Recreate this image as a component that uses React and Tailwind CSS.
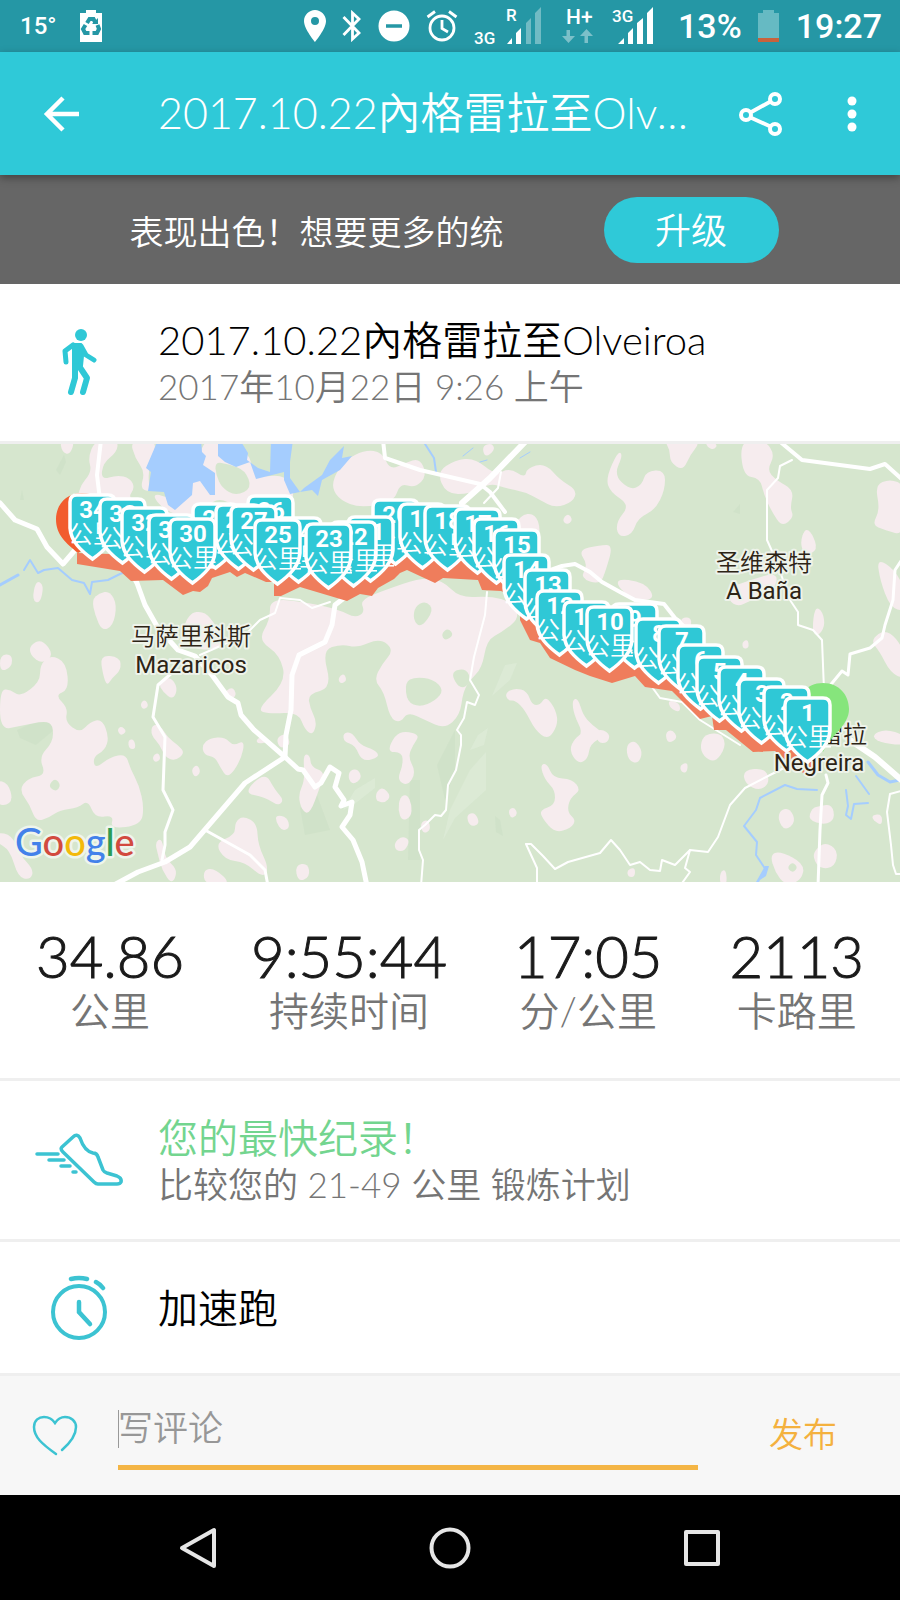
import React from "react";

const PINK = [
  [[60,440],[75,440],[70,455],[62,452]],
  [[88,458],[95,440],[118,440],[117,452],[103,463],[101,480],[117,475],[130,478],[135,488],[127,499],[155,510],[210,520],[75,525],[78,488],[92,472]],
  [[130,440],[158,440],[150,462],[148,482],[152,492],[140,489],[145,472],[135,458]],
  [[150,492],[175,500],[197,470],[203,440],[222,440],[248,450],[255,478],[285,474],[296,494],[285,508],[240,508],[215,496],[200,520],[165,512]],
  [[36,580],[44,585],[40,604],[32,600]],
  [[99,593],[110,591],[117,605],[113,626],[102,631],[95,615],[92,600]],
  [[0,655],[12,654],[12,667],[0,672]],
  [[188,613],[205,611],[215,625],[230,642],[205,652],[180,642]],
  [[270,598],[310,603],[340,610],[355,618],[365,612],[360,600],[385,590],[420,578],[442,580],[460,598],[490,596],[512,602],[520,618],[502,632],[487,640],[482,668],[470,680],[463,692],[460,715],[445,729],[425,720],[408,712],[400,723],[390,718],[384,692],[374,680],[382,664],[394,650],[380,638],[357,648],[342,644],[322,650],[332,688],[308,694],[310,708],[317,722],[313,735],[305,730],[298,712],[270,714],[256,710],[286,682],[280,655],[258,640],[270,620]],
  [[335,475],[345,460],[365,450],[382,452],[390,470],[405,463],[420,458],[427,476],[415,488],[400,483],[394,502],[360,508],[340,500],[332,488]],
  [[437,472],[455,460],[475,458],[495,475],[510,468],[525,478],[527,468],[545,463],[560,480],[577,490],[573,502],[555,508],[540,500],[525,492],[505,488],[490,483],[470,494],[446,494]],
  [[482,446],[492,443],[495,450],[485,458]],
  [[520,515],[535,513],[541,530],[535,555],[515,555],[510,535]],
  [[562,520],[568,513],[573,520],[567,525]],
  [[578,550],[600,545],[613,545],[606,570],[600,585],[580,578],[588,565]],
  [[618,451],[623,455],[614,475],[630,490],[642,485],[646,471],[665,470],[665,490],[655,510],[638,518],[632,535],[618,537],[616,522],[630,505],[610,492],[606,478]],
  [[664,440],[702,440],[690,455],[683,471],[670,462],[670,450]],
  [[705,440],[718,444],[714,450],[707,447]],
  [[740,440],[765,440],[775,455],[767,470],[776,480],[794,490],[790,508],[794,517],[782,527],[772,512],[764,495],[760,478],[743,476]],
  [[805,528],[812,533],[818,550],[805,556],[800,543]],
  [[723,590],[750,580],[778,572],[775,590],[752,600],[735,608]],
  [[875,485],[890,479],[905,485],[905,536],[885,530],[872,525],[880,510]],
  [[877,558],[895,570],[905,590],[905,612],[890,607],[880,580]],
  [[815,606],[823,612],[825,627],[817,637],[812,630]],
  [[742,642],[748,639],[749,648],[743,649]],
  [[870,640],[887,628],[905,650],[905,680],[890,672],[880,652]],
  [[682,617],[692,618],[690,630],[680,625]],
  [[612,578],[645,582],[656,600],[630,600]],
  [[668,700],[680,703],[680,713],[670,708]],
  [[700,745],[705,734],[722,733],[726,747],[715,763],[703,756]],
  [[665,733],[672,729],[678,738],[668,744]],
  [[626,745],[635,740],[643,752],[638,764],[628,760]],
  [[597,728],[610,733],[608,743],[597,743]],
  [[680,765],[688,762],[687,773],[681,772]],
  [[743,770],[765,768],[770,782],[760,791],[745,784]],
  [[780,810],[790,808],[796,822],[785,831],[778,820]],
  [[812,808],[820,806],[832,804],[835,819],[825,825],[808,820]],
  [[815,850],[825,842],[838,850],[835,867],[820,869],[813,858]],
  [[770,855],[780,851],[805,864],[801,881],[785,885],[775,872]],
  [[872,735],[885,729],[905,735],[905,746],[878,742]],
  [[872,815],[882,814],[882,826],[873,820]],
  [[720,872],[726,869],[727,885],[720,885]],
  [[627,870],[635,867],[635,877],[628,877]],
  [[505,693],[515,688],[527,691],[532,705],[540,705],[546,696],[556,710],[558,725],[548,740],[535,730],[525,710],[515,700],[508,701]],
  [[572,700],[578,698],[583,715],[592,725],[606,735],[590,744],[588,759],[578,764],[569,750],[575,738],[583,733],[574,715]],
  [[540,765],[547,763],[553,778],[572,779],[581,790],[570,798],[567,812],[576,820],[571,828],[555,833],[542,818],[540,810],[555,805],[555,790],[545,780]],
  [[466,815],[475,812],[480,824],[470,827]],
  [[508,810],[514,807],[518,814],[511,819]],
  [[395,735],[405,731],[420,735],[413,745],[408,757],[416,772],[408,786],[397,780],[403,765],[402,752],[387,752]],
  [[400,797],[407,794],[412,805],[411,817],[402,821],[398,810]],
  [[350,770],[358,769],[362,778],[353,785],[348,778]],
  [[376,792],[383,787],[391,796],[385,803],[376,801]],
  [[394,843],[402,836],[410,840],[405,851],[396,851]],
  [[343,733],[352,732],[360,745],[375,750],[380,757],[362,762],[355,745],[344,742]],
  [[338,678],[344,673],[347,681],[340,684]],
  [[303,754],[310,755],[311,767],[325,772],[320,787],[310,814],[302,811],[298,795],[305,780]],
  [[420,823],[428,819],[431,830],[423,834]],
  [[295,865],[308,863],[310,877],[298,882]],
  [[0,690],[10,689],[20,697],[40,682],[40,665],[50,655],[66,662],[69,690],[55,695],[68,708],[65,722],[80,733],[90,722],[102,719],[109,737],[105,750],[93,757],[95,769],[110,757],[126,754],[130,768],[139,785],[144,807],[141,825],[110,829],[114,815],[95,818],[88,800],[78,808],[60,810],[50,817],[36,822],[30,805],[19,790],[28,778],[46,775],[39,757],[53,742],[53,725],[45,721],[20,726],[0,730]],
  [[30,645],[42,639],[54,655],[42,664],[30,655]],
  [[-4,780],[8,783],[13,800],[5,806],[-4,803]],
  [[100,655],[120,657],[121,670],[112,678],[107,686],[103,675]],
  [[158,683],[170,676],[178,688],[173,700],[163,692]],
  [[140,704],[145,699],[149,706],[143,710]],
  [[117,730],[121,726],[127,731],[121,736]],
  [[128,740],[134,739],[136,749],[129,749]],
  [[152,725],[160,725],[168,738],[178,745],[185,753],[175,761],[165,757],[160,745],[151,735]],
  [[152,757],[158,752],[161,759],[155,763]],
  [[191,770],[197,764],[201,772],[195,778]],
  [[202,745],[210,738],[225,737],[233,746],[245,740],[241,760],[228,779],[220,767],[215,757],[204,755]],
  [[222,695],[232,686],[237,695],[230,700]],
  [[256,740],[262,736],[268,742],[258,744]],
  [[276,738],[286,733],[291,745],[280,749]],
  [[243,793],[265,772],[275,790],[284,800],[278,806],[265,797]],
  [[215,843],[235,835],[235,822],[243,816],[257,823],[258,845],[269,868],[263,878],[245,862],[225,860]],
  [[276,815],[287,817],[290,828],[282,831],[276,822]],
  [[203,870],[215,868],[232,885],[205,885]],
  [[155,842],[162,838],[165,858],[178,870],[172,885],[162,870],[158,855]],
  [[-4,832],[12,835],[20,855],[34,870],[30,880],[18,877],[10,850],[-4,842]],
];

const HOLES = [
  [[415,606],[426,601],[434,610],[421,628],[413,620]],
  [[441,634],[448,628],[454,635],[445,641]],
  [[405,682],[415,677],[433,679],[444,690],[435,701],[420,707],[407,702]],
  [[48,786],[55,778],[61,785],[56,792]],
  [[787,868],[792,862],[798,867],[793,873]],
  [[450,672],[466,668],[472,682],[460,690]],
  [[252,450],[268,440],[270,462],[264,464]],
  [[215,462],[228,464],[245,470],[252,488],[236,496],[222,488],[216,475]],
];

const LAKES = [
  [[158,440],[201,440],[202,452],[206,456],[203,465],[215,473],[215,495],[210,495],[200,481],[193,483],[192,495],[175,510],[168,505],[164,492],[148,491],[151,472],[146,468]],
  [[218,440],[240,440],[248,453],[247,460],[258,468],[270,472],[271,440],[293,440],[290,462],[290,478],[300,492],[290,494],[284,480],[284,472],[256,479],[250,462],[236,467],[225,462],[218,456]],
  [[344,446],[330,460],[322,475],[304,488],[300,492],[312,490],[318,496],[322,480],[340,470],[352,456],[342,458]],
  [[765,866],[769,866],[766,876],[760,880],[758,884],[756,882]],
];

const SHADES = [
  [[17,730],[50,715],[54,730],[36,745],[20,738]],
  [[437,765],[455,730],[455,770],[445,800]],
  [[410,780],[420,780],[420,860],[408,860]],
  [[495,816],[500,820],[503,836],[496,832]],
  [[300,808],[315,790],[330,830],[305,835]],
  [[56,470],[64,455],[66,462],[60,475]],
  [[733,512],[740,504],[740,514]],
  [[20,500],[22,490],[24,500]],
];

const LIGHTS = [
  [[450,810],[470,770],[486,752],[486,790],[455,818],[443,840]],
  [[492,696],[505,665],[517,663],[510,680]],
  [[470,750],[478,735],[488,728],[484,745]],
  [[343,810],[355,790],[375,778],[375,788],[352,806]],
];

const ROADS = [
  [5, "0,503 15,520 37,529 47,547 63,564 75,550 85,530"],
  [4, "101,440 97,475 100,500"],
  [5, "130,570 137,583 145,605 158,628 178,650 195,656 212,675 228,697 238,703 241,715 254,730 285,757 298,769 303,770 315,787 321,783 330,767 339,773 335,787 344,800 341,806 352,802 350,815 342,827 353,840 362,862 367,886"],
  [5, "285,757 245,783 190,847 165,862 138,872 112,886"],
  [5, "285,757 286,735 291,710 292,675 299,655 325,642 332,625 335,605 344,598"],
  [3, "173,672 158,685 153,717 165,737 163,790 173,810 165,832 165,845 162,860"],
  [3, "205,830 250,855 265,870 268,886"],
  [2, "200,655 245,635 260,620 275,613 280,598 300,600 312,608 330,602"],
  [4, "383,440 385,458 420,470 480,484 490,492 505,512"],
  [6, "525,442 490,478 462,503"],
  [2, "501,472 498,488 484,503"],
  [4, "545,572 562,566 575,564 590,572 602,582 620,592 635,600 664,604 675,618 690,632"],
  [2, "487,592 485,615 474,657 470,680 479,695 475,705 467,702 464,718 457,730 461,735 461,745 456,770 448,785 446,810 441,816 435,815 425,825 419,830 419,850 423,860 421,886"],
  [2, "537,886 537,868 526,844 531,844 543,856 555,869 568,862 600,853 611,840 620,850 630,865 640,862 650,870 660,871 662,860 675,865 690,850 708,852 718,837 730,805 745,788 770,775 790,765"],
  [2, "690,850 685,868 690,872 680,886"],
  [4, "778,440 802,460 870,469 885,464 905,482"],
  [2, "792,460 780,466 778,478 767,490 767,540 776,560 790,600 798,612 798,625 813,630 822,640 824,690"],
  [3, "905,555 895,570 893,600 885,625 882,638 870,648 850,654 848,675 842,671 828,688"],
  [6, "850,740 875,757 905,783"],
  [3, "826,775 828,783 822,795 820,830 818,886"],
  [2, "905,790 890,794 887,812 891,845 893,865 896,874 905,874"],
  [2, "652,687 660,698 682,702 700,720 740,745"],
];

const RIVERS = [
  [3, "0,585 18,575"],
  [2, "24,570 30,560 38,573 44,570 58,568 72,580 84,583 90,594 92,582 108,580 120,574 140,566"],
  [2, "425,444 434,458 436,472"],
  [1, "463,456 473,448 M480,462 487,460 M520,458 530,452"],
  [2, "817,790 797,789 785,785 760,798 756,810 744,826 757,842 756,855 766,870"],
  [2, "846,790 848,806 846,815 851,819 854,804 868,803"],
  [2, "856,776 869,794"],
  [3, "868,762 878,775 890,782 905,779"],
];

const PINS = [
  [34,68,493],[33,98,497],[32,120,506],[31,147,513],[30,168,517],[29,191,502],
  [28,214,503],[27,229,504],[26,246,494],[25,253,518],[24,274,516],[23,304,522],
  [22,329,520],[21,346,515],[20,371,498],[19,398,502],[18,423,504],[17,453,507],
  [16,472,517],[15,492,528],[14,502,553],[13,523,568],[12,535,589],[11,562,600],
  [10,585,605],[9,610,602],[8,634,617],[7,657,624],[6,676,643],[5,695,655],
  [4,717,665],[3,737,677],[2,762,685],[1,783,696],
].sort((a, b) => a[2] - b[2]);

function smooth(points) {
  const n = points.length;
  const mid = (a, b) => [(a[0] + b[0]) / 2, (a[1] + b[1]) / 2];
  const start = mid(points[n - 1], points[0]);
  let d = `M${start[0]} ${start[1]}`;
  points.forEach((p, i) => {
    const m = mid(p, points[(i + 1) % n]);
    d += `Q${p[0]} ${p[1]} ${m[0]} ${m[1]}`;
  });
  return d + "Z";
}

const straight = (points) => "M" + points.map((p) => p.join(" ")).join("L") + "Z";

function Pin({ km, x, y }) {
  return (
    <g transform={`translate(${x} ${y})`}>
      <path
        d="M9 2H40Q47 2 47 9V35C46 48 37 57 24.500 66C12 57 3 48 2 35V9Q2 2 9 2Z"
        fill="#2fc8d6"
        stroke="#fff"
        strokeWidth="3.500"
      />
      <g clipPath="url(#pin)" fill="#fff" textAnchor="middle">
        <text x="25" y="25" className="font-['Roboto'] text-[24px] font-bold">{km}</text>
        <text x="25" y="50" className="font-['Noto_Sans_CJK_SC'] text-[25px] font-[350]">公里</text>
      </g>
    </g>
  );
}

function MapLabel({ x, y, lines, localX = x }) {
  return (
    <g
      textAnchor="middle"
      fill="#2d2416"
      stroke="#eef3ea"
      strokeWidth="4"
      strokeLinejoin="round"
      style={{ paintOrder: "stroke" }}
      className="font-['Roboto','Noto_Sans_CJK_SC',sans-serif] text-[24px]"
    >
      <text x={localX} y={y}>{lines[0]}</text>
      <text x={x} y={y + 28} className="font-normal">{lines[1]}</text>
    </g>
  );
}

function RouteMap() {
  return (
    <svg viewBox="0 444 900 438" className="block w-full" role="img" aria-label="路线地图">
      <defs>
        <clipPath id="pin"><rect x="1" y="2" width="47" height="62" /></clipPath>
      </defs>
      <rect y="440" width="900" height="446" fill="#d6e6ce" />
      {SHADES.map((p, i) => <path key={i} d={straight(p)} fill="#c9dcc3" opacity="0.400" />)}
      {LIGHTS.map((p, i) => <path key={i} d={straight(p)} fill="#dfecda" opacity="0.600" />)}
      {PINK.map((p, i) => <path key={i} d={smooth(p)} fill="#f6ecee" />)}
      {HOLES.map((p, i) => <path key={i} d={smooth(p)} fill="#d6e6ce" />)}
      {LAKES.map((p, i) => <path key={i} d={straight(p)} fill="#a5cdfe" />)}
      <g fill="none" strokeLinejoin="round" strokeLinecap="round">
        {RIVERS.map(([w, p], i) => <path key={i} d={"M" + p} stroke="#a5cdfe" strokeWidth={w} />)}
        {ROADS.map(([w, p], i) => <polyline key={i} points={p} stroke="#fff" strokeWidth={w} />)}
      </g>
      <path
        d="M77 553L77 564L120 571L131 581L163 580L183 595L193 591L200 592L208 586L212 578L230 572L237 577L245 573L266 582L274 582L274 596L281 596L300 587L347 601L360 594L372 596L378 588L394 579L400 573L407 570L435 583L443 578L478 580L482 590L501 591L520 600L520 620L530 640L540 643L550 658L575 670L590 676L612 683L635 676L645 687L672 691L700 719L712 716L714 730L726 730L753 752L775 751L795 768L805 774L818 768L815 752L762 732L700 700L640 660L587 655L545 620L520 570L478 562L396 555L330 575L278 570L240 555L193 570L145 555Z"
        fill="#ef7d5c"
      />
      <MapLabel x={191} y={645} lines={["马萨里科斯", "Mazaricos"]} />
      <MapLabel x={764} y={571} lines={["圣维森特", "A Baña"]} />
      <MapLabel x={819} y={743} localX={831} lines={["格雷拉", "Negreira"]} />
      <path d="M82 493C65 493 56 506 56 519C56 535 66 543 78 553C96 543 108 535 108 519C108 506 99 493 82 493Z" fill="#f25c2e" />
      <path d="M823 683C806 683 797 696 797 709C797 725 813 733 823 752C833 733 849 725 849 709C849 696 840 683 823 683Z" fill="#86e57c" />
      {PINS.map(([km, x, y]) => <Pin key={km} km={km} x={x} y={y} />)}
      <text
        x="15"
        y="856"
        stroke="#eef5ec"
        strokeWidth="5"
        strokeLinejoin="round"
        style={{ paintOrder: "stroke" }}
        className="font-['Lato',sans-serif] text-[38px] font-medium"
      >
        <tspan fill="#4381ea">G</tspan>
        <tspan fill="#d24a3f">o</tspan>
        <tspan fill="#f3b90b">o</tspan>
        <tspan fill="#4381ea">g</tspan>
        <tspan fill="#2c9c55">l</tspan>
        <tspan fill="#d24a3f">e</tspan>
      </text>
    </svg>
  );
}

function StatusBar() {
  return (
    <div className="flex h-[52px] items-center justify-between bg-[#2597a5] pr-[18px] pl-5 font-['Roboto',sans-serif] text-white">
      <div className="flex items-center gap-6">
        <span className="text-[24px] font-medium">15°</span>
        <svg width="22" height="32" viewBox="0 0 22 32">
          <path d="M6 0H16V3H22V32H0V3H6Z" fill="#fff" />
          <g fill="none" stroke="#2597a5" strokeWidth="4">
            <path d="M7 13L9.500 9H13.500L15.500 13" />
            <path d="M17.500 15L19 19L17 23H12.500" />
            <path d="M9.500 23H5L3 19L5.500 15" />
          </g>
          <path d="M12 14H18V8Z" fill="#2597a5" />
        </svg>
      </div>
      <div className="flex items-center gap-4">
        <svg width="22" height="32" viewBox="0 0 22 32">
          <path fillRule="evenodd" d="M11 0C5 0 0 5 0 11C0 19 11 32 11 32S22 19 22 11C22 5 17 0 11 0ZM11 7A4 4 0 1 1 11 15A4 4 0 1 1 11 7Z" fill="#fff" />
        </svg>
        <svg width="20" height="32" viewBox="0 0 20 32" fill="none" stroke="#fff" strokeWidth="2.800">
          <path d="M1.500 7L17 23L10.500 29V3L17 9L1.500 25" />
        </svg>
        <svg width="32" height="32" viewBox="0 0 32 32">
          <circle cx="16" cy="16" r="15.500" fill="#fff" />
          <path d="M8 16H24" stroke="#2597a5" strokeWidth="3.500" />
        </svg>
        <svg width="32" height="32" viewBox="0 0 32 32" fill="none" stroke="#fff" strokeWidth="2.800">
          <circle cx="16" cy="18" r="12" />
          <path d="M16 10V18.500L22 22M1.500 7L9 1.500M30.500 7L23 1.500" />
        </svg>
        <svg width="68" height="48" viewBox="0 -5 68 48" fill="#fff" className="font-['Roboto'] font-medium">
          <text x="0" y="37" className="text-[17px]">3G</text>
          <text x="32" y="14" className="text-[17px]">R</text>
          <path d="M33 37L38 31V37ZM42 26L47 21V37H42Z" />
          <path d="M52 16L57 11V37H52ZM61 6L67 0V37H61Z" opacity="0.350" />
        </svg>
        <svg width="38" height="48" viewBox="0 -5 38 48" fill="#fff" className="font-['Roboto'] font-medium">
          <text x="8" y="17" className="text-[21px]">H+</text>
          <path d="M8.500 23H12V29H17L10.500 36L4 29H8.500ZM26.500 36H30V29H35L28.500 22L22 29H26.500Z" opacity="0.400" />
        </svg>
        <svg width="42" height="48" viewBox="0 -5 42 48" fill="#fff" className="font-['Roboto'] font-medium">
          <text x="0" y="15" className="text-[17px]">3G</text>
          <path d="M6 37L12 31V37ZM16 26L21 21V37H16ZM25 16L31 11V37H25ZM35 6L41 0V37H35Z" />
        </svg>
        <span className="ml-2 text-[34px] font-medium">13%</span>
        <svg width="22" height="32" viewBox="0 0 22 32">
          <path d="M5 0H16V3H21V32H0V3H5Z" fill="#66bac3" />
          <path d="M0 28H21V32H0Z" fill="#c8623c" />
        </svg>
        <span className="text-[34px] font-medium">19:27</span>
      </div>
    </div>
  );
}

function AppBar() {
  return (
    <header className="relative flex h-[123px] items-center bg-[#2fc9d8] pr-9 pl-[42px] text-white shadow-[0_3px_8px_rgba(0,0,0,0.350)]">
      <button type="button" aria-label="返回" className="shrink-0">
        <svg width="38" height="38" viewBox="0 0 38 38" fill="none" stroke="#fff" strokeWidth="4.500">
          <path d="M21 3L5 19L21 35M4 19H37" />
        </svg>
      </button>
      <h1 className="ml-[78px] min-w-0 flex-1 truncate text-[43px] font-[350]">2017.10.22內格雷拉至Olveiroa</h1>
      <button type="button" aria-label="分享" className="ml-10 shrink-0">
        <svg width="46" height="46" viewBox="0 0 46 46" fill="none" stroke="#fff" strokeWidth="4">
          <circle cx="8" cy="24" r="5" />
          <circle cx="37" cy="8" r="5" />
          <circle cx="37" cy="38" r="5" />
          <path d="M12.500 21.500L32.500 10.500M12.500 26.500L32.500 35.500" />
        </svg>
      </button>
      <button type="button" aria-label="更多" className="ml-14 shrink-0">
        <svg width="24" height="36" viewBox="0 0 24 36" fill="#fff">
          <circle cx="12" cy="5" r="4.500" />
          <circle cx="12" cy="18" r="4.500" />
          <circle cx="12" cy="31" r="4.500" />
        </svg>
      </button>
    </header>
  );
}

function Row({ icon, children, className }) {
  return (
    <section className={`flex items-center border-b-[3px] border-[#efefef] ${className}`}>
      <div className="flex w-[158px] shrink-0 justify-center">{icon}</div>
      <div className="min-w-0 flex-1">{children}</div>
    </section>
  );
}

function Stat({ value, label }) {
  return (
    <div className="flex flex-col items-center">
      <dd className="text-[58px] leading-[60px] text-[#1a1a1a] [-webkit-text-stroke:1px_#1a1a1a]">{value}</dd>
      <dt className="order-last text-[40px] leading-[50px] text-[#757575]">{label}</dt>
    </div>
  );
}

export default function App() {
  return (
    <div lang="zh-CN" className="flex min-h-screen w-full flex-col bg-white font-['Lato','Noto_Sans_CJK_SC',sans-serif] font-[350]">
      <StatusBar />
      <AppBar />
      <div className="flex h-[109px] items-center justify-center gap-[100px] bg-[#666] pl-2 text-white">
        <p className="pt-1 text-[34px] whitespace-nowrap">表现出色！想要更多的统</p>
        <button type="button" className="h-[66px] w-[175px] rounded-full bg-[#2fc9d8] text-[36px]">升级</button>
      </div>
      <Row
        className="h-[160px] pb-0.5"
        icon={
          <svg width="36" height="68" viewBox="0 0 36 68" fill="none" stroke="#2fc8d6" strokeLinecap="round" strokeLinejoin="round">
            <circle cx="20" cy="7" r="6" fill="#2fc8d6" stroke="none" />
            <path d="M12 16L20 16L22 28L21 38H12L12 28Z" fill="#2fc8d6" strokeWidth="2" />
            <path d="M12 17L4 23L5 34M20 18L25 27L33 32" strokeWidth="5" />
            <path d="M14 38V50L10 64M18 38L26 50L22 64" strokeWidth="6" />
          </svg>
        }
      >
        <h2 className="truncate text-[40px] leading-[48px] text-black">2017.10.22內格雷拉至Olveiroa</h2>
        <p className="text-[35px] leading-[44px] text-[#757575]">2017年10月22日 9:26 上午</p>
      </Row>
      <RouteMap />
      <dl className="flex h-[199px] items-center justify-between border-b-[3px] border-[#efefef] px-9 pt-0.5">
        <Stat value="34.86" label="公里" />
        <Stat value="9:55:44" label="持续时间" />
        <Stat value="17:05" label="分/公里" />
        <Stat value="2113" label="卡路里" />
      </dl>
      <Row
        className="h-[161px]"
        icon={
          <svg width="88" height="54" viewBox="0 0 88 54" fill="none" stroke="#3cc3d2" strokeWidth="3.500" strokeLinecap="round" strokeLinejoin="round">
            <path d="M27 14L38 4Q42 0 45 5C48 14 53 19 58 20Q62 20 63 24L68 37Q69 39 72 40L82 43Q87 45 86 49Q85 51 82 51H63Q61 51 59 49L28 19Q25 16 27 14Z" />
            <path d="M2 21H23M14 27H29M26 33H35M38 39H41" />
          </svg>
        }
      >
        <h2 className="text-[40px] leading-[48px] text-[#73d58f]">您的最快纪录！</h2>
        <p className="text-[35px] leading-[44px] text-[#757575]">比较您的 21-49 公里 锻炼计划</p>
      </Row>
      <Row
        className="h-[134px]"
        icon={
          <svg width="58" height="66" viewBox="0 0 58 66" fill="none" stroke="#3cc3d2" strokeWidth="4" strokeLinecap="round">
            <circle cx="29" cy="37" r="26" />
            <path d="M29 27V37L40 49" strokeWidth="4.500" />
            <path d="M21 4Q29 2 37 4M46 7Q50 9 53 13" strokeWidth="4.500" />
          </svg>
        }
      >
        <h2 className="text-[40px] text-black">加速跑</h2>
      </Row>
      <form className="flex h-[119px] items-center bg-[#f7f7f7]" onSubmit={(e) => e.preventDefault()}>
        <button type="button" aria-label="赞" className="ml-8 shrink-0">
          <svg width="46" height="42" viewBox="0 0 46 42" fill="none" stroke="#3cc3d2" strokeWidth="2.500" strokeLinecap="round">
            <path d="M24 39C10 29 2 22 2 12C2 5 7 2 12 2C17 2 21 5 23 8C25 5 29 2 33 2C39 2 44 6 44 12C44 20 38 28 30 35" />
          </svg>
        </button>
        <div className="relative ml-10 min-w-0 flex-1">
          <input
            type="text"
            aria-label="写评论"
            placeholder="写评论"
            className="block h-[68px] w-full border-b-[5px] border-[#f4b545] bg-transparent pb-3 text-[35px] outline-none placeholder:text-[#979797]"
          />
          <span className="absolute top-2 left-0 h-[38px] w-px bg-[#999]" />
        </div>
        <button type="submit" className="mr-[58px] ml-[66px] w-[78px] shrink-0 pb-1 text-[34px] whitespace-nowrap text-[#f4b13e]">发布</button>
      </form>
      <nav className="grid h-[105px] flex-1 grid-cols-3 items-center bg-black px-[72px]">
        <button type="button" aria-label="返回" className="flex justify-center">
          <svg width="38" height="42" viewBox="0 0 38 42" fill="none" stroke="#e6e6e6" strokeWidth="4" strokeLinejoin="round">
            <path d="M35 3V39L3 21Z" />
          </svg>
        </button>
        <button type="button" aria-label="主页" className="flex justify-center">
          <svg width="42" height="42" viewBox="0 0 42 42" fill="none" stroke="#e6e6e6" strokeWidth="4">
            <circle cx="21" cy="21" r="18.500" />
          </svg>
        </button>
        <button type="button" aria-label="最近" className="flex justify-center">
          <svg width="38" height="38" viewBox="0 0 38 38" fill="none" stroke="#e6e6e6" strokeWidth="4" strokeLinejoin="round">
            <rect x="3" y="3" width="32" height="32" />
          </svg>
        </button>
      </nav>
    </div>
  );
}
